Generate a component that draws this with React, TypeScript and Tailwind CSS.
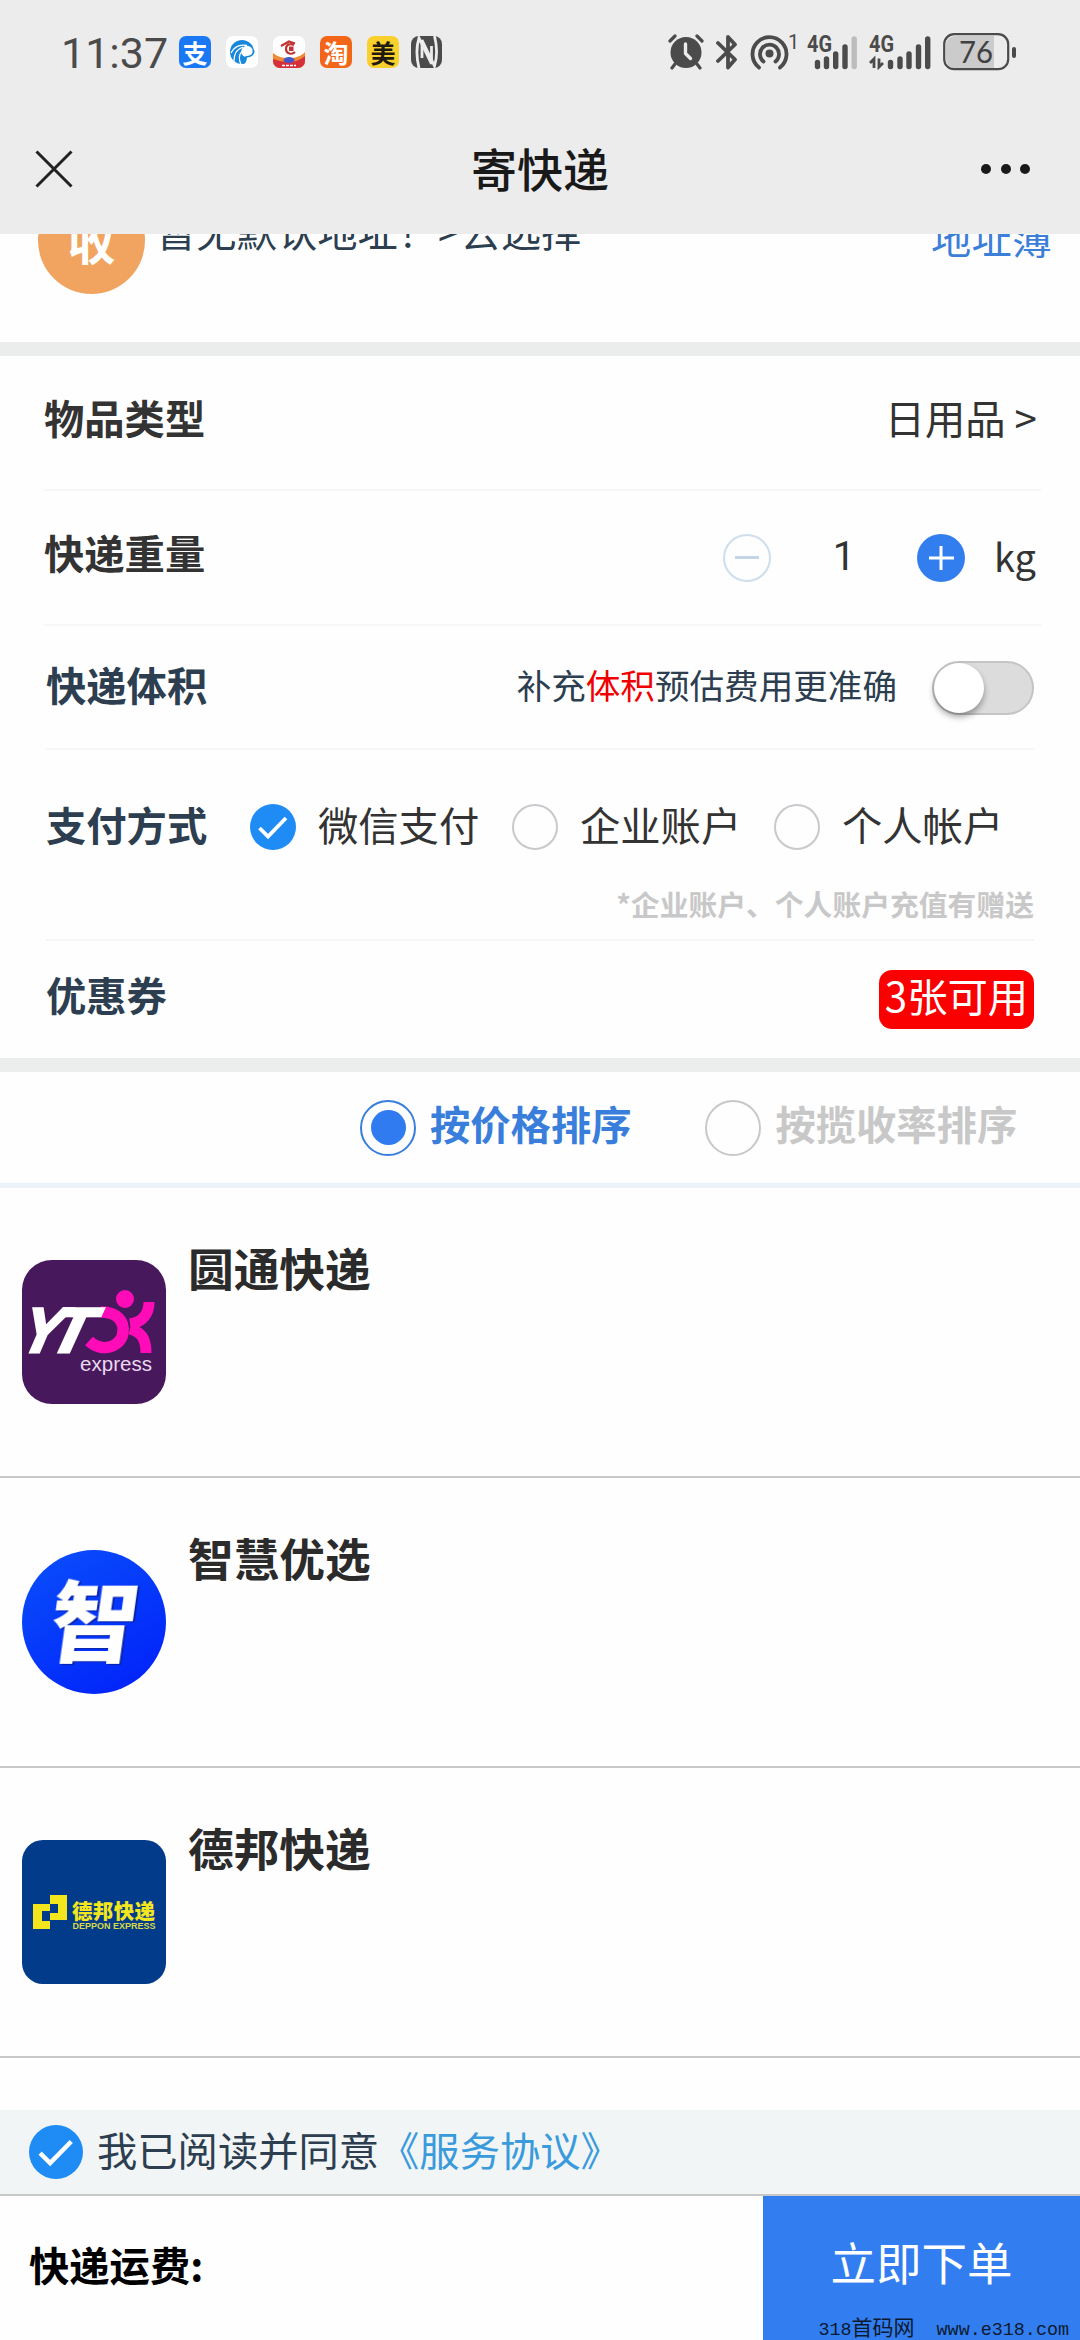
import React, { useState } from 'react';

interface RowProps {
  children: React.ReactNode;
  className?: string;
}

interface Courier {
  name: string;
  logo: React.ReactNode;
}

// ---------- status bar icons ----------

function AppBadge({ className, children }: { className: string; children: React.ReactNode }) {
  return (
    <span className={`flex h-8 w-8 items-center justify-center rounded-[7px] text-[25px] leading-none font-bold ${className}`}>
      {children}
    </span>
  );
}

function SwirlIcon() {
  return (
    <svg viewBox="0 0 32 32" className="h-8 w-8">
      <circle cx="16" cy="16" r="12" fill="#1788dc" />
      <circle cx="21" cy="15.500" r="5.800" fill="#fff" />
      <path d="M21 9.500C13 8 8 11 5 17M17 11C10 14 8 18 8 25M15.500 16C12 20 13 24 15 28.500" fill="none" stroke="#fff" strokeWidth="1.300" />
      <path d="M26 18c-1 2-3 3-5 3 0 3-1 5-3 8h12V17z" fill="#fff" />
      <path d="M27.500 14c1 4-3 7.500-8 6.500" fill="none" stroke="#1788dc" strokeWidth="1.600" />
    </svg>
  );
}

function RedAppIcon() {
  return (
    <svg viewBox="0 0 32 32" className="h-8 w-8 rounded-[7px]">
      <path d="M0 17c5 4 9 5 16 5s12-2 16-6v16H0z" fill="#f08a35" />
      <path d="M0 23c6 2 10 3 16 3s11-2 16-6v12H0z" fill="#d5303a" />
      <ellipse cx="16" cy="24" rx="5.500" ry="3" fill="#4656c9" />
      <path d="M9 29.500h14" stroke="#fff" strokeWidth="1.600" strokeDasharray="3 1" />
      <path d="M8 10l8-4.500 6 2M21 9c-5-2-8 0-8 4 0 5 6 6 9 3" fill="none" stroke="#c03532" strokeWidth="2.200" />
      <path d="M16 10.500h4.500v4.500H16z" fill="#c03532" />
    </svg>
  );
}

function NfcIcon() {
  return (
    <svg viewBox="0 0 31 32" className="h-8 w-[31px]">
      <rect width="31" height="32" rx="8" fill="#4b4b4b" />
      <path d="M8 32C5.500 22 5.500 10 8 2L20.500 28V10" fill="none" stroke="#ececec" strokeWidth="2.800" />
      <path d="M23.500 0C26 10 26 22 23.500 30L11 4v18" fill="none" stroke="#ececec" strokeWidth="2.800" />
    </svg>
  );
}

function AlarmIcon() {
  return (
    <svg viewBox="0 0 36 36" className="h-9 w-9">
      <circle cx="18" cy="18.500" r="15.500" fill="#4b4b4b" />
      <path d="M2 7l5-5M34 7l-5-5M7 30l-3 4M29 30l3 4" stroke="#4b4b4b" strokeWidth="3.200" strokeLinecap="round" />
      <path d="M17.500 10v9.500l5 5" fill="none" stroke="#ececec" strokeWidth="3.400" strokeLinecap="round" strokeLinejoin="round" />
    </svg>
  );
}

function BluetoothIcon() {
  return (
    <svg viewBox="0 0 22 36" className="h-9 w-[22px]">
      <path d="M2 9l17 16.500-7 8V3l7 7.500L2 27" fill="none" stroke="#4b4b4b" strokeWidth="3.800" strokeLinecap="round" strokeLinejoin="round" />
    </svg>
  );
}

function HotspotIcon() {
  return (
    <svg viewBox="0 0 48 36" className="h-9 w-12">
      <circle cx="19.500" cy="19.500" r="4" fill="#4b4b4b" />
      <path d="M13.500 27.500a9.500 9.500 0 1 1 12 0M9 33.500a17 17 0 1 1 21 0" fill="none" stroke="#4b4b4b" strokeWidth="3.800" strokeLinecap="round" />
      <text x="38" y="14.500" fontSize="20" fontFamily="Roboto" fill="#4b4b4b">1</text>
    </svg>
  );
}

function SignalFourG() {
  return (
    <svg viewBox="0 0 50 36" className="h-9 w-[50px]">
      <text x="0" y="18" fontSize="23" fontFamily="Roboto" fontWeight="700" fill="#4b4b4b" textLength="25" lengthAdjust="spacingAndGlyphs">4G</text>
      <g stroke="#4b4b4b" strokeWidth="5.400" strokeLinecap="round">
        <path d="M10.500 28.500v4M19.500 25v7.500M28.700 20v12.500M38 13v19.500" />
        <path d="M47.200 5v27.500" stroke="#bcbcbc" />
      </g>
    </svg>
  );
}

function SignalFourGData() {
  return (
    <svg viewBox="0 0 62 36" className="h-9 w-[62px]">
      <text x="0" y="18" fontSize="23" fontFamily="Roboto" fontWeight="700" fill="#4b4b4b" textLength="25" lengthAdjust="spacingAndGlyphs">4G</text>
      <path d="M1 29l4-4v9M10 24.500V33l4-4" fill="none" stroke="#4b4b4b" strokeWidth="2.800" />
      <path d="M21.500 28.500v4M31 25v7.500M40 20v12.500M49.500 13v19.500M58.700 5v27.500" stroke="#4b4b4b" strokeWidth="5.400" strokeLinecap="round" />
    </svg>
  );
}

function Battery() {
  return (
    <svg viewBox="0 0 74 38" className="h-[38px] w-[74px]">
      <path d="M12 3h39v32H12a9 9 0 0 1-9-9V12a9 9 0 0 1 9-9z" fill="#cbcbcb" />
      <rect x="1.200" y="1.200" width="64" height="35" rx="10" fill="none" stroke="#4b4b4b" strokeWidth="2.200" />
      <path d="M71 16v7" stroke="#4b4b4b" strokeWidth="4" strokeLinecap="round" />
      <text x="16" y="30" fontSize="31" fontFamily="Lato" fill="#404040" textLength="34" lengthAdjust="spacingAndGlyphs">76</text>
    </svg>
  );
}

function StatusBar() {
  return (
    <div className="flex h-[104px] items-center justify-between pr-[63px] pl-[61px]">
      <div className="flex items-center">
        <span className="w-[118px] pt-0.5 font-['Roboto',sans-serif] text-[43px] leading-none text-[#4b4b4b]">11:37</span>
        <div className="flex items-center gap-[15px]">
          <AppBadge className="bg-[#1b78f5] text-white">支</AppBadge>
          <AppBadge className="bg-white"><SwirlIcon /></AppBadge>
          <AppBadge className="bg-white"><RedAppIcon /></AppBadge>
          <AppBadge className="bg-[#f3661a] text-white">淘</AppBadge>
          <AppBadge className="bg-[#fad02c] text-[#1e1a10]">美</AppBadge>
          <div className="-ml-[3px]"><NfcIcon /></div>
        </div>
      </div>
      <div className="flex items-center gap-3">
        <AlarmIcon />
        <BluetoothIcon />
        <HotspotIcon />
        <div className="-ml-[3px]"><SignalFourG /></div>
        <SignalFourGData />
        <Battery />
      </div>
    </div>
  );
}

function TitleBar() {
  return (
    <div className="grid h-[130px] grid-cols-3 items-center pr-12 pl-[35px]">
      <svg viewBox="0 0 38 38" className="h-[38px] w-[38px]">
        <path d="M1.500 1.500l35 35M36.500 1.500l-35 35" stroke="#222" strokeWidth="3" />
      </svg>
      <h1 className="-mr-[13px] pb-1 text-center text-[46px] leading-none font-medium text-[#191919]">寄快递</h1>
      <svg viewBox="0 0 52 12" className="h-3 w-[52px] justify-self-end">
        <circle cx="6" cy="6" r="5" fill="#191919" />
        <circle cx="26" cy="6" r="5" fill="#191919" />
        <circle cx="45" cy="6" r="5" fill="#191919" />
      </svg>
    </div>
  );
}

// ---------- form ----------

function CheckCircle({ className }: { className: string }) {
  return (
    <svg viewBox="0 0 46 46" className={className}>
      <circle cx="23" cy="23" r="23" fill="#1f8bf5" />
      <path d="M9.500 24l8.500 8.500 18-18.500" fill="none" stroke="#fff" strokeWidth="3.800" />
    </svg>
  );
}

function Row({ children, className = '' }: RowProps) {
  return <div className={`flex items-center border-b-2 border-[#f6f6f6] ${className}`}>{children}</div>;
}

// ---------- courier logos ----------

function YtoLogo() {
  return (
    <svg viewBox="0 0 144 144" className="h-36 w-36">
      <rect width="144" height="144" rx="30" fill="#48185c" />
      <g fill="none" stroke="#ff0cb8">
        <path d="M79 52c18 0 23 11 22 20-1 14-20 22-34 9" strokeWidth="11.500" />
        <path d="M127 42c0 12-6 20-19 22M108 69c11 3 16 9 16 24" strokeWidth="11" />
      </g>
      <circle cx="103" cy="39" r="9" fill="#ff0cb8" />
      <g transform="translate(0 92) skewX(-14)" fontFamily="Liberation Sans" fontWeight="700" fontSize="63" fill="#fff" stroke="#fff" strokeWidth="3">
        <text x="-4" y="-0.500" textLength="39" lengthAdjust="spacingAndGlyphs" fontStyle="italic">Y</text>
        <text x="25" y="-0.500" textLength="41" lengthAdjust="spacingAndGlyphs" fontStyle="italic">T</text>
      </g>
      <text x="58" y="111" fontSize="20" fontFamily="Liberation Sans" fill="#e9d9ef" textLength="72" lengthAdjust="spacingAndGlyphs">express</text>
    </svg>
  );
}

function ZhiLogo() {
  return (
    <svg viewBox="0 0 144 144" className="h-36 w-36">
      <defs>
        <linearGradient id="zhi" x1="0" y1="0" x2="0.600" y2="1">
          <stop offset="0" stopColor="#0a50fb" />
          <stop offset="1" stopColor="#0226fa" />
        </linearGradient>
      </defs>
      <circle cx="72" cy="72" r="72" fill="url(#zhi)" />
      <text
        x="39"
        y="105"
        transform="skewX(-8)"
        fontFamily="Noto Sans CJK SC"
        fontWeight="900"
        fontSize="88"
        fill="#fff"
        className="drop-shadow-[2px_1px_0_#0821a8]"
      >
        智
      </text>
    </svg>
  );
}

function DepponLogo() {
  return (
    <svg viewBox="0 0 144 144" className="h-36 w-36">
      <rect width="144" height="144" rx="21" fill="#033b8b" />
      <path d="M28 55h17v25H28v9H11V64h17zM28 64v7h-8v10h8v-8h8v-9z" fill="#f3e61d" fillRule="evenodd" />
      <text x="50" y="79" fontSize="20.500" fontFamily="Noto Sans CJK SC" fontWeight="900" fill="#f3e61d" textLength="83">德邦快递</text>
      <text x="50.500" y="89" fontSize="8.500" fontFamily="Liberation Sans" fontWeight="700" fill="#d9da45" textLength="83" lengthAdjust="spacingAndGlyphs">DEPPON EXPRESS</text>
    </svg>
  );
}

const couriers: Courier[] = [
  { name: '圆通快递', logo: <YtoLogo /> },
  { name: '智慧优选', logo: <ZhiLogo /> },
  { name: '德邦快递', logo: <DepponLogo /> }
];

const payMethods = ['微信支付', '企业账户', '个人帐户'];

export default function App() {
  const [payMethod, setPayMethod] = useState(0);
  const [weight, setWeight] = useState(1);
  const [sortByPrice, setSortByPrice] = useState(true);

  return (
    <div className="relative flex h-[2340px] w-[1080px] flex-col overflow-hidden bg-[#fefefe] font-['Noto_Sans_CJK_SC',sans-serif] text-[40.300px] leading-none text-[#333]">
      <header className="h-[234px] shrink-0 bg-[#ececec]">
        <StatusBar />
        <TitleBar />
      </header>

      {/* receiver, partly scrolled under the header */}
      <section className="h-[108px] shrink-0 overflow-hidden">
        <div className="-mt-[47px] flex h-[107px] items-center pr-[28px] pl-[38px]">
          <div className="flex h-[107px] w-[107px] items-center justify-center rounded-full bg-[#f0a45f] pb-1 text-[48px] font-bold text-white">收</div>
          <span className="ml-[11px] pb-[21px] text-[#2c3e50]">暂无默认地址！&gt;去选择</span>
          <span className="ml-auto pb-[7px] text-[#3b7fd8]">地址簿</span>
        </div>
      </section>
      <div className="h-3.5 shrink-0 bg-[#ebedec]" />

      <section className="h-[702px] shrink-0 px-[46px]">
        <Row className="-mr-[7px] -ml-[2px] h-[135px] justify-between pr-[4px] pb-2.5">
          <span className="font-bold">物品类型</span>
          <span>日用品 &gt;</span>
        </Row>
        <Row className="-mr-[7px] -ml-[2px] h-[135px] pr-[5px]">
          <span className="pb-2.5 font-bold">快递重量</span>
          <div className="ml-auto flex items-center">
            <button onClick={() => setWeight(Math.max(1, weight - 1))} className="flex h-12 w-12 items-center justify-center rounded-full border-2 border-[#cddeed]">
              <span className="h-[3px] w-6 bg-[#c3d5e6]" />
            </button>
            <span className="w-[146px] pb-0.5 text-center font-['Roboto',sans-serif] text-[40px]">{weight}</span>
            <button onClick={() => setWeight(weight + 1)} className="h-12 w-12 rounded-full bg-[#337eee]">
              <svg viewBox="0 0 48 48"><path d="M12 24h25M24 12v24" stroke="#fff" strokeWidth="3" /></svg>
            </button>
            <span className="ml-[29px] pb-1 text-[38px]">kg</span>
          </div>
        </Row>
        <Row className="h-[124px] text-[#2c3e50]">
          <span className="pb-1.5 font-bold">快递体积</span>
          <span className="ml-auto pb-1.5 text-[34.600px]">
            补充<span className="text-[#f00000]">体积</span>预估费用更准确
          </span>
          <span className="mt-0.5 ml-[35px] flex h-[54px] w-[102px] rounded-full border-2 border-[#c4c4c4] bg-[#dcdcdc]">
            <span className="h-[50px] w-[50px] rounded-full bg-white shadow-[0_4px_6px_rgba(0,0,0,0.350)]" />
          </span>
        </Row>
        <div className="h-[191px] border-b-2 border-[#f6f6f6] pt-[54px]">
          <div className="flex h-[46px] items-center">
            <span className="w-[204px] shrink-0 pb-1.5 font-bold text-[#2c3e50]">支付方式</span>
            {payMethods.map((method, i) => (
              <button key={method} onClick={() => setPayMethod(i)} className="flex w-[262px] shrink-0 items-center">
                {payMethod === i ? (
                  <CheckCircle className="h-[46px] w-[46px] shrink-0" />
                ) : (
                  <span className="h-[46px] w-[46px] shrink-0 rounded-full border-2 border-[#c8c9cc]" />
                )}
                <span className="ml-[22px] shrink-0 pb-1.5">{method}</span>
              </button>
            ))}
          </div>
          <p className="mt-[40px] text-right text-[28.800px] leading-none font-bold text-[#c8c8c8]">*企业账户、个人账户充值有赠送</p>
        </div>
        <div className="flex h-[117px] items-center justify-between text-[#2c3e50]">
          <span className="pb-2.5 font-bold">优惠券</span>
          <span className="h-[59px] w-[155px] rounded-[13px] bg-[#fb0000] pt-[5px] text-center text-white">3张可用</span>
        </div>
      </section>
      <div className="h-3.5 shrink-0 bg-[#ebeeed]" />

      <section className="flex h-[116px] shrink-0 items-center border-b-[5px] border-[#ebf2f9] pl-[360px] font-bold">
        <button onClick={() => setSortByPrice(true)} className={`flex items-center ${sortByPrice ? 'text-[#3a7edc]' : 'text-[#c8c8c8]'}`}>
          <span className="flex h-14 w-14 items-center justify-center rounded-full border-2 border-current">
            {sortByPrice && <span className="h-[35px] w-[35px] rounded-full bg-[#2f7bef]" />}
          </span>
          <span className="ml-[14px] pb-2">按价格排序</span>
        </button>
        <button onClick={() => setSortByPrice(false)} className={`ml-[74px] flex items-center ${sortByPrice ? 'text-[#c8c8c8]' : 'text-[#3a7edc]'}`}>
          <span className="flex h-14 w-14 items-center justify-center rounded-full border-2 border-current">
            {!sortByPrice && <span className="h-[35px] w-[35px] rounded-full bg-[#2f7bef]" />}
          </span>
          <span className="ml-[14px] pb-2">按揽收率排序</span>
        </button>
      </section>

      <ul className="grow">
        {couriers.map((courier) => (
          <li key={courier.name} className="flex h-[290px] border-b-2 border-[#c8c8c8] pt-[72px] pl-[22px]">
            {courier.logo}
            <h2 className="ml-[22px] -mt-[15px] text-[45.700px] leading-none font-bold text-[#2b2b2b]">{courier.name}</h2>
          </li>
        ))}
      </ul>

      <div className="flex h-[84px] shrink-0 items-center bg-[#f2f5f5] pl-[29px] text-[#2c3e50]">
        <CheckCircle className="h-[54px] w-[54px]" />
        <span className="ml-[14px] pb-1.5">我已阅读并同意<span className="text-[#3a9bdc]">《服务协议》</span></span>
      </div>
      <footer className="flex h-[146px] shrink-0 items-center justify-between border-t-2 border-[#c8c8c8]">
        <span className="pb-2 pl-[29px] font-bold text-black">快递运费:</span>
        <button className="h-[144px] w-[317px] bg-[#327ef1] pb-3 text-[45.500px] leading-none text-white">立即下单</button>
      </footer>

      <span className="absolute right-[11px] bottom-0 font-['Liberation_Mono','Noto_Sans_CJK_SC',monospace] text-[18.400px] leading-[18px] whitespace-pre text-[#0c1a30]">
        318<span className="text-[21px] leading-[18px]">首码网</span>  www.e318.com
      </span>
    </div>
  );
}
